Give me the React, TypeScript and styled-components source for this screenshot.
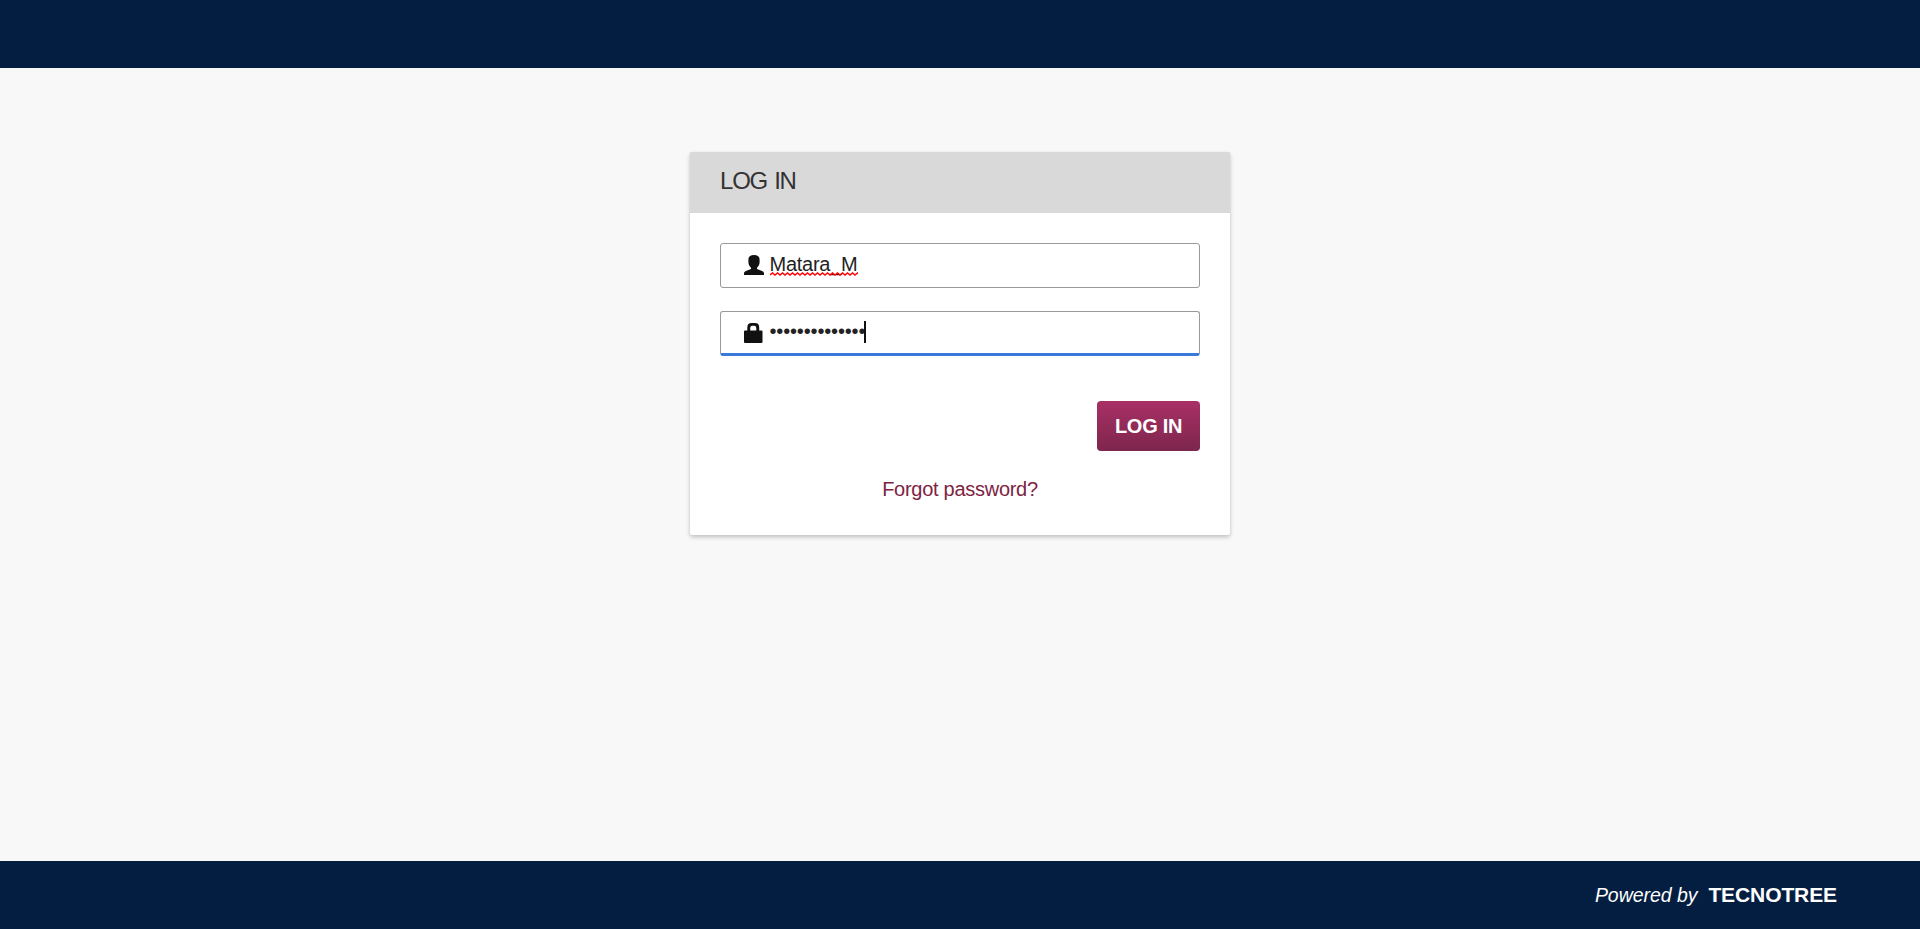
import React from 'react';
import styled, { createGlobalStyle } from 'styled-components';

const GlobalStyle = createGlobalStyle`
  * { box-sizing: border-box; }
  body {
    margin: 0;
    background: #f8f8f8;
    font-family: "Liberation Sans", Arial, sans-serif;
  }
`;

const Page = styled.div`
  display: flex;
  flex-direction: column;
  height: 100vh;
  overflow: hidden;
`;

const Header = styled.header`
  flex: 0 0 68px;
  background: #041e42;
`;

const Main = styled.main`
  flex: 1;
  display: flex;
  justify-content: center;
  align-items: flex-start;
  padding-top: 84px;
`;

const Footer = styled.footer`
  flex: 0 0 68px;
  display: flex;
  justify-content: flex-end;
  align-items: baseline;
  padding: 22px 83px 0 0;
  gap: 11px;
  background: #041e42;
  color: #fff;
`;

const Powered = styled.em`
  font-size: 19.5px;
  line-height: 24px;
  letter-spacing: -0.05px;
`;

const Brand = styled.strong`
  font-size: 21px;
  line-height: 24px;
  letter-spacing: -0.1px;
`;

const Card = styled.section`
  width: 540px;
  height: 383px;
  background: #fff;
  border-radius: 2px;
  box-shadow: 0 2px 4px rgba(0, 0, 0, 0.24);
`;

const CardTitle = styled.h1`
  margin: 0;
  height: 61px;
  padding: 15px 30px 0;
  border-radius: 1px 1px 0 0;
  background: #d9d9d9;
  color: #333;
  font-size: 24px;
  font-weight: 400;
  line-height: 28px;
  letter-spacing: -1.2px;
  word-spacing: 1.6px;
`;

const Form = styled.form`
  display: flex;
  flex-direction: column;
  padding: 30px 30px 0;
`;

const Field = styled.div<{ $active?: boolean }>`
  display: flex;
  align-items: flex-start;
  height: 45px;
  margin-bottom: 23px;
  padding: 11px 23px 0;
  border: 1px solid #999;
  border-bottom: ${(p) => (p.$active ? '3px solid #3879d9' : '1px solid #999')};
  border-radius: 3px;
  color: #222;
`;

const FieldIcon = styled.svg`
  flex: none;
  width: 20px;
  height: 20px;
  margin-right: 5.5px;
  fill: #111;
`;

const Username = styled.span`
  position: relative;
  margin-top: -2px;
  font-size: 20px;
  line-height: 23px;
  letter-spacing: -0.25px;
`;

const Squiggle = styled.svg`
  position: absolute;
  left: 0;
  top: 18.5px;
  width: 88px;
  height: 4px;
  fill: none;
  stroke: #f00;
  stroke-width: 1.4;
`;

const Password = styled.span`
  margin-top: -3px;
  font-size: 20px;
  line-height: 23px;
  letter-spacing: -0.16px;
`;

const Caret = styled.span`
  width: 2px;
  height: 22px;
  margin: -2px 0 0 -1.5px;
  background: #111;
`;

const Submit = styled.button`
  align-self: flex-end;
  width: 103px;
  height: 50px;
  margin-top: 22px;
  padding: 0;
  border: 0;
  border-radius: 4px;
  background: linear-gradient(#a93066, #7d264c);
  color: #fff;
  font: bold 20px "Liberation Sans", Arial, sans-serif;
  letter-spacing: -0.3px;
`;

const Forgot = styled.a`
  align-self: center;
  margin-top: 26px;
  color: #7d2343;
  font-size: 20px;
  line-height: 24px;
  letter-spacing: -0.28px;
`;

const squigglePath =
  'M0 3 ' + Array.from({ length: 18 }, (_, i) => `L${i * 5 + 2.5} 1 L${i * 5 + 5} 3`).join(' ');

export default function App() {
  return (
    <Page>
      <GlobalStyle />
      <Header />
      <Main>
        <Card>
          <CardTitle>LOG IN</CardTitle>
          <Form>
            <Field>
              <FieldIcon viewBox="0 0 20 20">
                <path d="M10 0C6.4 0 4.4 1.5 4.4 4.6V7C4.4 9.3 5.4 11.4 7 12.8V14L1.9 16C.6 16.6 0 17.5 0 18.6V20H20V18.6C20 17.5 19.4 16.6 18.1 16L13 14V12.8C14.6 11.4 15.6 9.3 15.6 7V4.6C15.6 1.5 13.6 0 10 0Z" />
              </FieldIcon>
              <Username>
                Matara_M
                <Squiggle viewBox="0 0 88 4">
                  <path d={squigglePath} />
                </Squiggle>
              </Username>
            </Field>
            <Field $active>
              <FieldIcon viewBox="0 0 20 20">
                <path
                  fillRule="evenodd"
                  d="M3.3 7.5V4.4Q3.3 0 7.7 0H10.9Q15.2 0 15.2 4.4V7.5H17.5Q18.5 7.5 18.5 8.5V19Q18.5 20 17.5 20H1Q0 20 0 19V8.5Q0 7.5 1 7.5ZM6.2 7.5H12.3V5Q12.3 2.8 10.2 2.8H8.3Q6.2 2.8 6.2 5Z"
                />
              </FieldIcon>
              <Password>••••••••••••••</Password>
              <Caret />
            </Field>
            <Submit type="button">LOG IN</Submit>
            <Forgot>Forgot password?</Forgot>
          </Form>
        </Card>
      </Main>
      <Footer>
        <Powered>Powered by</Powered>
        <Brand>TECNOTREE</Brand>
      </Footer>
    </Page>
  );
}
